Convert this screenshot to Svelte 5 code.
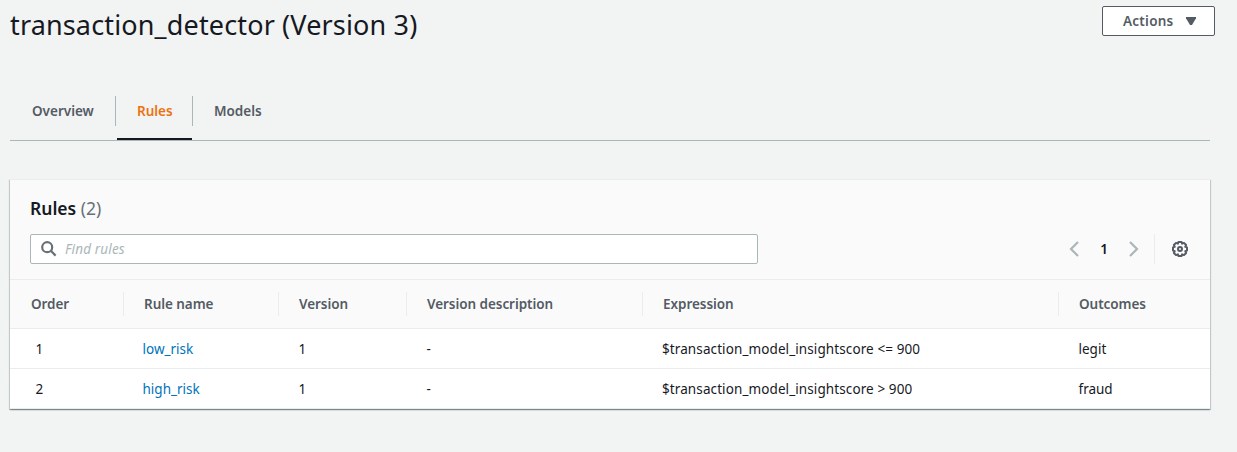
<script>
  const tabs = ['Overview', 'Rules', 'Models'];
  let active = $state('Rules');
  const columns = ['Order', 'Rule name', 'Version', 'Version description', 'Expression', 'Outcomes'];
  const rows = [
    { order: 1, name: 'low_risk', version: 1, description: '-', expression: '$transaction_model_insightscore <= 900', outcome: 'legit' },
    { order: 2, name: 'high_risk', version: 1, description: '-', expression: '$transaction_model_insightscore > 900', outcome: 'fraud' }
  ];
</script>

<main>
  <header>
    <h1>transaction_detector (Version 3)</h1>
    <button class="actions"><span>Actions</span>
      <svg width="10" height="8" viewBox="0 0 10 8"><path d="M0 0h10v1.2L6 8H4L0 1.2z" fill="currentColor" /></svg>
    </button>
  </header>

  <nav>
    {#each tabs as tab}
      <button class="tab" class:active={tab === active} onclick={() => (active = tab)}><span>{tab}</span></button>
    {/each}
  </nav>

  <section>
    <div class="top">
      <h2>Rules <span>(2)</span></h2>
      <div class="tools">
        <label class="search">
          <svg width="16" height="16" viewBox="0 0 16 16" fill="none" stroke="#687078" stroke-width="2.2"><circle cx="6.2" cy="6.2" r="5" /><path d="M9.8 9.8l4.8 4.8" /></svg>
          <input placeholder="Find rules" />
        </label>
        <div class="pager">
          <svg width="10" height="16" viewBox="0 0 10 16" fill="none" stroke="#aab7b8" stroke-width="2.2"><path d="M9 1L2 8l7 7" /></svg>
          <b>1</b>
          <svg width="10" height="16" viewBox="0 0 10 16" fill="none" stroke="#aab7b8" stroke-width="2.2"><path d="M1 1l7 7-7 7" /></svg>
        </div>
        <div class="settings">
          <svg width="16" height="16" viewBox="0 0 16 16" fill="none" stroke="#545b64" stroke-width="2" stroke-linejoin="round"><path d="M6.4 1h3.2l.5 1.7 1.9-.8 2.1 2.1-.8 1.9 1.7.5v3.2l-1.7.5.8 1.9-2.1 2.1-1.9-.8-.5 1.7H6.4l-.5-1.7-1.9.8L1.9 12l.8-1.9L1 9.6V6.4l1.7-.5L1.9 4 4 1.9l1.9.8z" /><circle cx="8" cy="8" r="2" /></svg>
        </div>
      </div>
    </div>
    <div class="row head">
      {#each columns as c}<div><span>{c}</span></div>{/each}
    </div>
    {#each rows as r}
      <div class="row">
        <div class="order">{r.order}</div>
        <div><a href="#{r.name}">{r.name}</a></div>
        <div>{r.version}</div>
        <div>{r.description}</div>
        <div class="expression">{r.expression}</div>
        <div>{r.outcome}</div>
      </div>
    {/each}
  </section>
</main>

<style>
  :global(body) { background: #f2f3f3; }
  main { box-sizing: border-box; height: 452px; padding: 0 22px 0 10px; font: 13.5px/20px 'Noto Sans', sans-serif; color: #16191f; overflow: hidden; }
  button { font: inherit; }
  header { display: flex; justify-content: space-between; height: 81px; }
  h1 { margin: 5px 0 0; font-size: 27px; line-height: 40px; font-weight: 400; letter-spacing: 0.15px; white-space: nowrap; }
  .actions { box-sizing: border-box; width: 113px; height: 30px; margin-top: 6px; padding: 0 18px 0 20px; display: flex; align-items: center; justify-content: space-between; border: 1px solid #545b64; border-radius: 2px; background: #fff; color: #545b64; font-size: 13.5px; font-weight: 650; letter-spacing: 0.25px; }
  nav { display: flex; box-sizing: border-box; width: 1200px; height: 60px; padding-top: 15px; border-bottom: 1px solid #aab7b8; }
  .tab { display: flex; box-sizing: border-box; width: 77px; height: 44px; padding: 0; border: 0; background: none; color: #545b64; font-size: 13.5px; font-weight: 650; }
  .tab span { box-sizing: border-box; width: 100%; height: 30px; line-height: 30px; text-align: left; padding-left: 21px; border-right: 1px solid #aab7b8; }
  .tab:first-child { width: 106px; }
  .tab:first-child span { padding-left: 22px; }
  .tab:last-child span { border: 0; }
  .tab.active { color: #ec7211; background: linear-gradient(#16191f, #16191f) 1px 100% / 75px 2px no-repeat; }
  section { width: 1200px; margin-top: 39px; background: #fff; box-shadow: 0 1px 1px rgba(0, 28, 36, .3), 1px 1px 1px rgba(0, 28, 36, .15), -1px 1px 1px rgba(0, 28, 36, .15); }
  .top { box-sizing: border-box; height: 101px; margin-top: -1px; padding: 17px 20px 0; background: #fafafa; border-top: 1px solid #eaeded; border-bottom: 1px solid #eaeded; }
  h2 { margin: 0; font-size: 17.5px; line-height: 22px; height: 37px; font-weight: 650; }
  h2 span { font-weight: 400; color: #687078; }
  .tools { display: flex; align-items: center; }
  .search { box-sizing: border-box; width: 728px; height: 30px; padding-left: 10px; display: flex; align-items: center; gap: 8px; border: 1px solid #aab7b8; border-radius: 2px; background: #fff; }
  input { border: 0; padding: 0; outline: 0; background: none; font: inherit; letter-spacing: 0.15px; }
  input::placeholder { color: #aab7b8; font-style: italic; }
  .pager { display: flex; align-items: center; justify-content: space-between; width: 70px; margin-left: auto; }
  .pager b { font-size: 13.5px; font-weight: 650; }
  .settings { box-sizing: border-box; height: 30px; width: 36px; margin-left: 15px; padding-left: 17px; display: flex; align-items: center; border-left: 1px solid #eaeded; }
  .settings svg { flex: none; }
  .row { display: grid; grid-template-columns: 113px 155px 128px 236px 416px 152px; align-items: center; box-sizing: border-box; height: 40px; border-bottom: 1px solid #eaeded; }
  .row > div { padding-left: 20.5px; white-space: nowrap; }
  .row > div:nth-child(2) { padding-left: 19.5px; }
  .row .order { padding-left: 25.5px; }
  .row .expression { padding-left: 20px; letter-spacing: 0.1px; }
  .head { height: 49px; background: #fafafa; font-size: 13.5px; font-weight: 650; color: #545b64; }
  .head > div, .head > div:nth-child(2) { height: 24px; line-height: 24px; box-sizing: border-box; padding-left: 20px; border-left: 1px solid #eaeded; letter-spacing: -0.05px; }
  .head > div:first-child { border-left: 0; padding-left: 21px; }
  a { color: #0073bb; text-decoration: none; }
</style>
